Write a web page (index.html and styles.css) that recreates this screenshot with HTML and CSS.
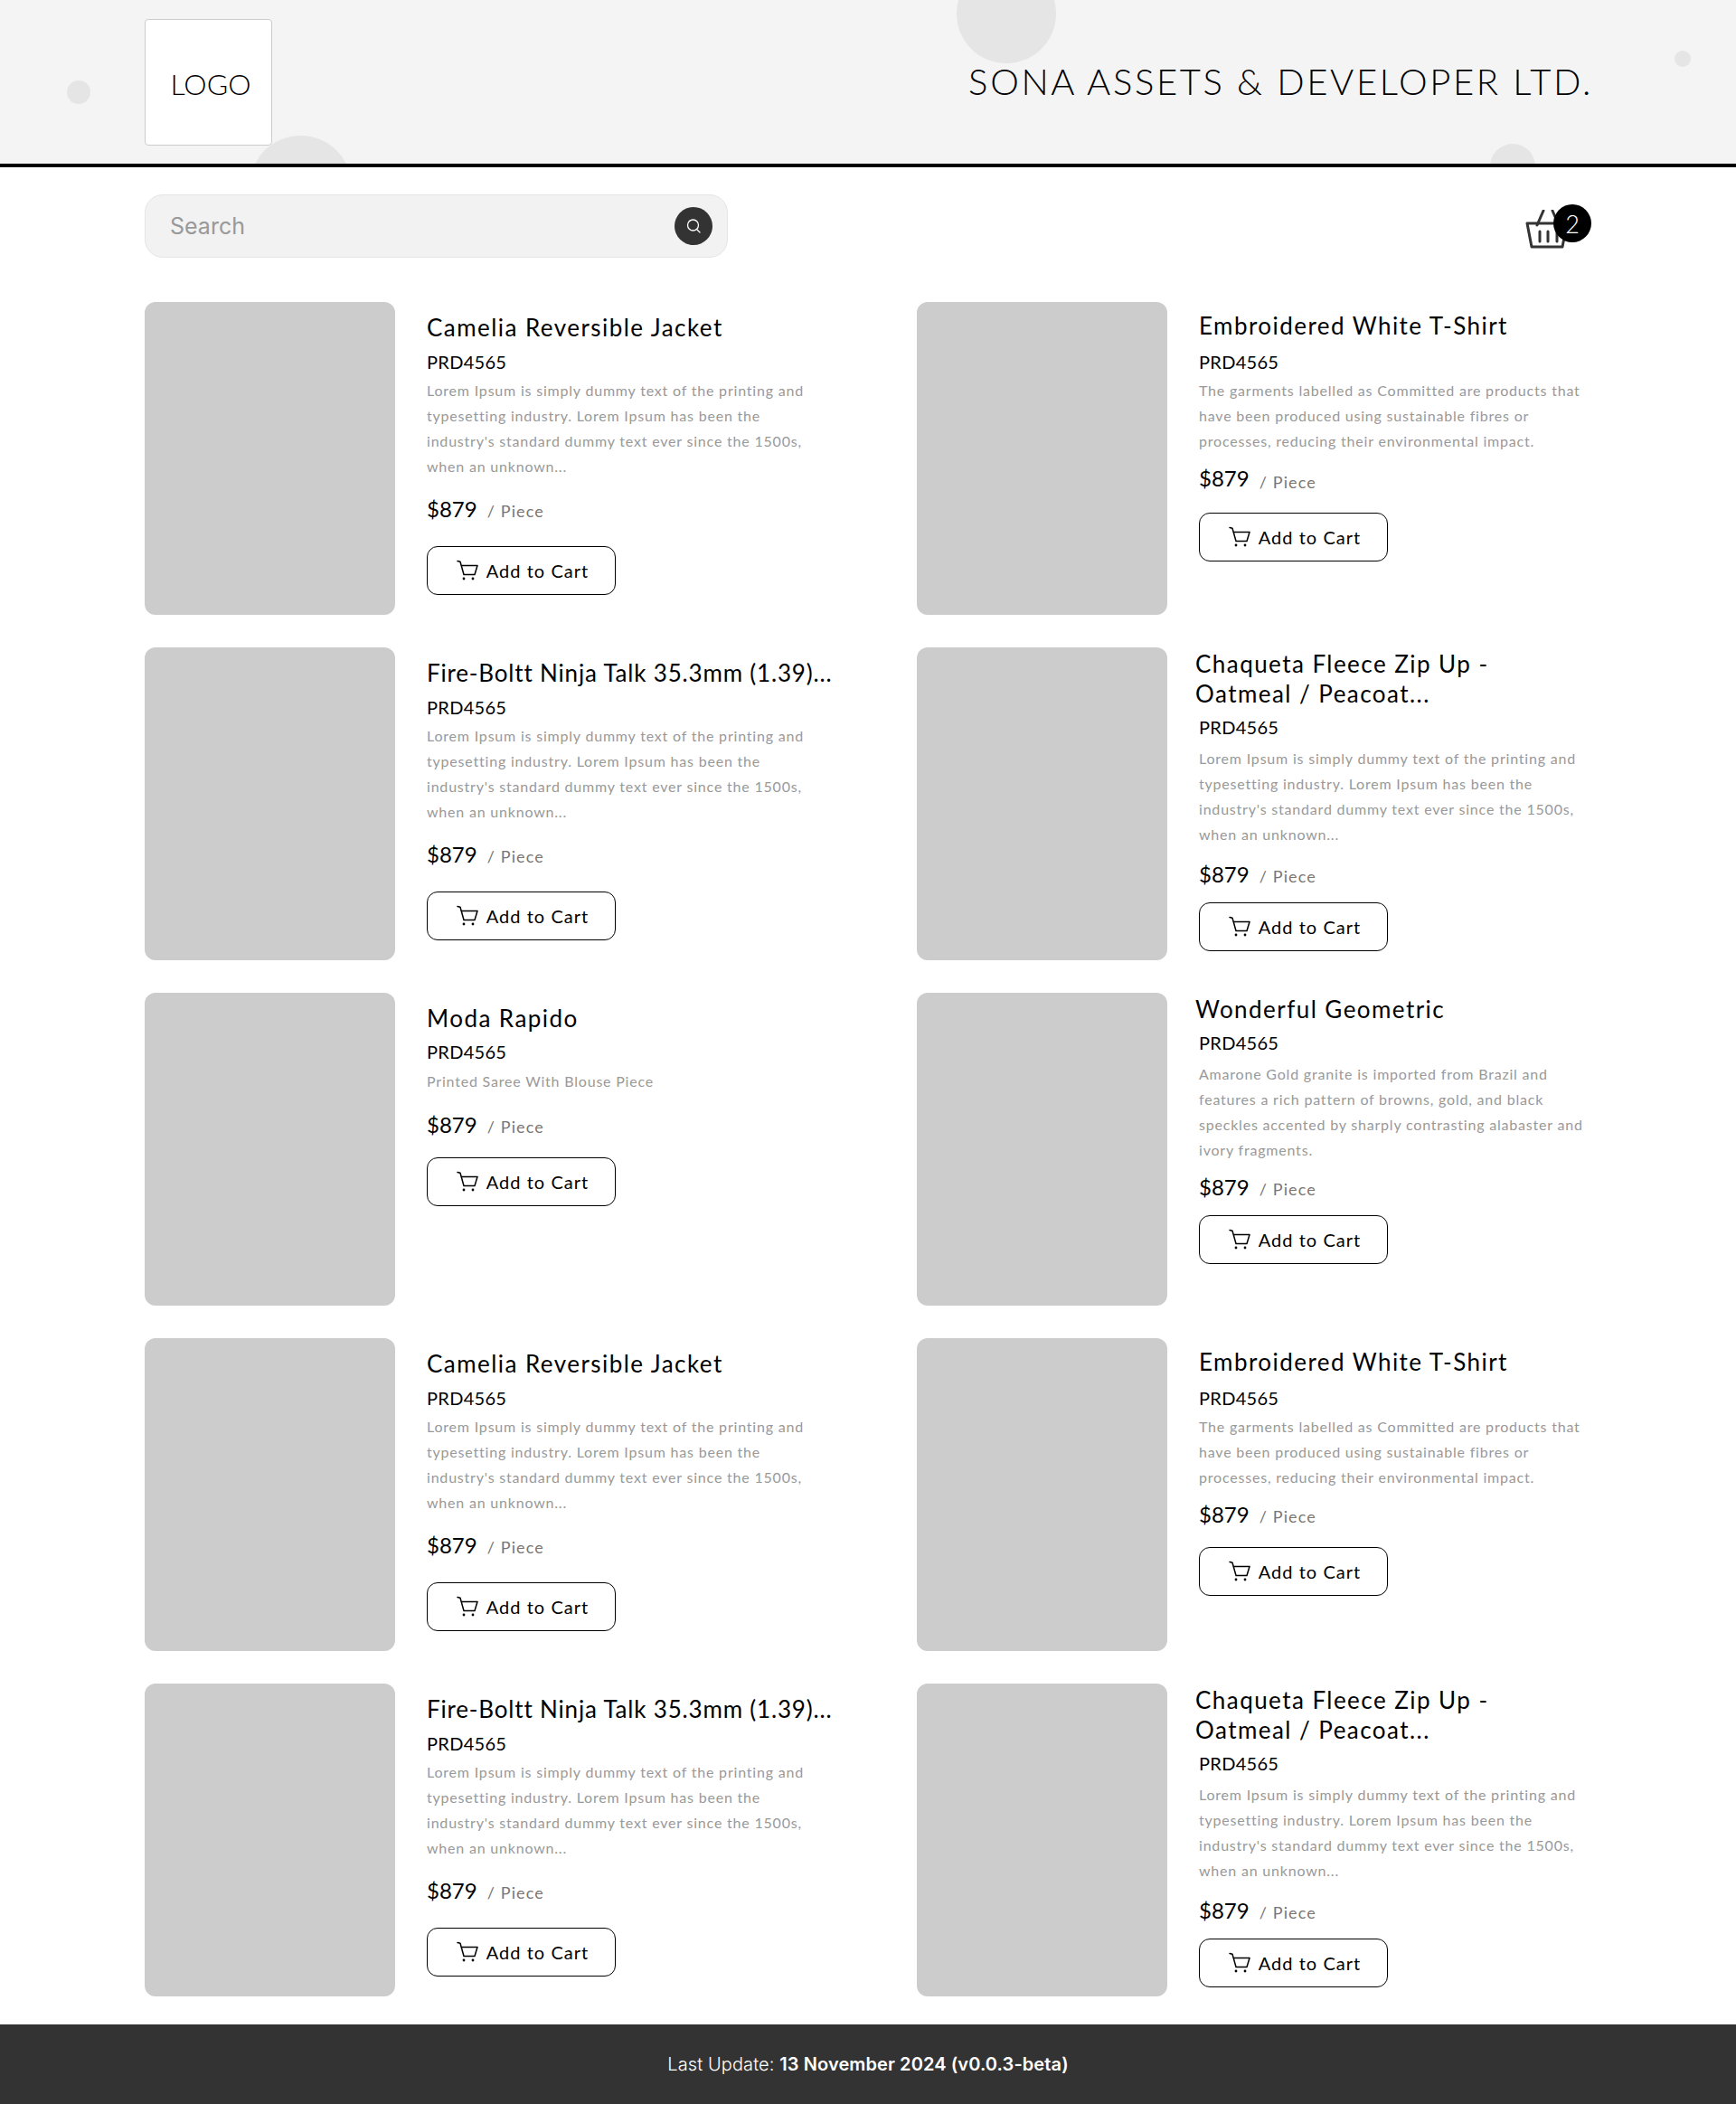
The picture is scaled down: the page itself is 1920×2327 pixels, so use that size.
FILE: index.html
```html
<!DOCTYPE html>
<html lang="en">
<head>
  <meta charset="UTF-8">
  <title>Sona Assets &amp; Developer Ltd.</title>
  <link rel="stylesheet" href="styles.css">
</head>
<body>

<!-- header -->
<div class="header">
  <span class="dot dot-1"></span>
  <span class="dot dot-2"></span>
  <span class="dot dot-3"></span>
  <span class="dot dot-4"></span>
  <span class="dot dot-5"></span>
  <div class="logo">LOGO</div>
  <div class="company">SONA ASSETS &amp; DEVELOPER LTD.</div>
</div>

<!-- search + basket -->
<div class="toolbar">
  <div class="search">
    <input type="text" placeholder="Search">
    <button class="search-btn" type="button">
      <svg viewBox="0 0 18 18" width="18" height="18" fill="none" stroke="#fff" stroke-width="1.3" stroke-linecap="round"><circle cx="8.5" cy="8" r="6"/><path d="M12.5 12.5l3.5 3.5"/></svg>
    </button>
  </div>
  <div class="basket">
    <svg viewBox="0 0 48 44" width="48" height="44" fill="none" stroke="#333" stroke-width="3" stroke-linecap="round" stroke-linejoin="round">
      <path d="M2 15H46L41 41H7Z"/>
      <path d="M13 17L20 1M30 1L37 17"/>
      <path d="M16 24V35M25 24V35M35 24V35"/>
    </svg>
    <span class="badge">2</span>
  </div>
</div>

<!-- products -->
<div class="products">

  <div class="card">
    <div class="thumb"></div>
    <div class="info">
      <div class="title">Camelia Reversible Jacket</div>
      <div class="code">PRD4565</div>
      <p class="desc">Lorem Ipsum is simply dummy text of the printing and typesetting industry. Lorem Ipsum has been the industry's standard dummy text ever since the 1500s, when an unknown...</p>
      <div class="price">$879 <span class="unit">/ Piece</span></div>
      <a href="#" class="add-btn"><svg class="cart-icon" viewBox="0 0 24 24"><path d="M1 1.5L4 2.2L8 16.5H20L23 6.5H5"/><circle cx="8" cy="21" r="1.4"/><circle cx="18" cy="21" r="1.4"/></svg>Add to Cart</a>
    </div>
  </div>

  <div class="card short">
    <div class="thumb"></div>
    <div class="info">
      <div class="title">Embroidered White T-Shirt</div>
      <div class="code">PRD4565</div>
      <p class="desc">The garments labelled as Committed are products that have been produced using sustainable fibres or processes, reducing their environmental impact.</p>
      <div class="price">$879 <span class="unit low">/ Piece</span></div>
      <a href="#" class="add-btn"><svg class="cart-icon" viewBox="0 0 24 24"><path d="M1 1.5L4 2.2L8 16.5H20L23 6.5H5"/><circle cx="8" cy="21" r="1.4"/><circle cx="18" cy="21" r="1.4"/></svg>Add to Cart</a>
    </div>
  </div>

  <div class="card">
    <div class="thumb"></div>
    <div class="info">
      <div class="title dense">Fire-Boltt Ninja Talk 35.3mm (1.39)...</div>
      <div class="code">PRD4565</div>
      <p class="desc">Lorem Ipsum is simply dummy text of the printing and typesetting industry. Lorem Ipsum has been the industry's standard dummy text ever since the 1500s, when an unknown...</p>
      <div class="price">$879 <span class="unit">/ Piece</span></div>
      <a href="#" class="add-btn"><svg class="cart-icon" viewBox="0 0 24 24"><path d="M1 1.5L4 2.2L8 16.5H20L23 6.5H5"/><circle cx="8" cy="21" r="1.4"/><circle cx="18" cy="21" r="1.4"/></svg>Add to Cart</a>
    </div>
  </div>

  <div class="card two-line">
    <div class="thumb"></div>
    <div class="info">
      <div class="title">Chaqueta Fleece Zip Up -<br>Oatmeal / Peacoat...</div>
      <div class="code">PRD4565</div>
      <p class="desc">Lorem Ipsum is simply dummy text of the printing and typesetting industry. Lorem Ipsum has been the industry's standard dummy text ever since the 1500s, when an unknown...</p>
      <div class="price">$879 <span class="unit">/ Piece</span></div>
      <a href="#" class="add-btn"><svg class="cart-icon" viewBox="0 0 24 24"><path d="M1 1.5L4 2.2L8 16.5H20L23 6.5H5"/><circle cx="8" cy="21" r="1.4"/><circle cx="18" cy="21" r="1.4"/></svg>Add to Cart</a>
    </div>
  </div>

  <div class="card one-line">
    <div class="thumb"></div>
    <div class="info">
      <div class="title">Moda Rapido</div>
      <div class="code">PRD4565</div>
      <p class="desc">Printed Saree With Blouse Piece</p>
      <div class="price">$879 <span class="unit">/ Piece</span></div>
      <a href="#" class="add-btn"><svg class="cart-icon" viewBox="0 0 24 24"><path d="M1 1.5L4 2.2L8 16.5H20L23 6.5H5"/><circle cx="8" cy="21" r="1.4"/><circle cx="18" cy="21" r="1.4"/></svg>Add to Cart</a>
    </div>
  </div>

  <div class="card tight">
    <div class="thumb"></div>
    <div class="info">
      <div class="title">Wonderful Geometric</div>
      <div class="code">PRD4565</div>
      <p class="desc">Amarone Gold granite is imported from Brazil and features a rich pattern of browns, gold, and black speckles accented by sharply contrasting alabaster and ivory fragments.</p>
      <div class="price">$879 <span class="unit">/ Piece</span></div>
      <a href="#" class="add-btn"><svg class="cart-icon" viewBox="0 0 24 24"><path d="M1 1.5L4 2.2L8 16.5H20L23 6.5H5"/><circle cx="8" cy="21" r="1.4"/><circle cx="18" cy="21" r="1.4"/></svg>Add to Cart</a>
    </div>
  </div>

  <div class="card">
    <div class="thumb"></div>
    <div class="info">
      <div class="title">Camelia Reversible Jacket</div>
      <div class="code">PRD4565</div>
      <p class="desc">Lorem Ipsum is simply dummy text of the printing and typesetting industry. Lorem Ipsum has been the industry's standard dummy text ever since the 1500s, when an unknown...</p>
      <div class="price">$879 <span class="unit">/ Piece</span></div>
      <a href="#" class="add-btn"><svg class="cart-icon" viewBox="0 0 24 24"><path d="M1 1.5L4 2.2L8 16.5H20L23 6.5H5"/><circle cx="8" cy="21" r="1.4"/><circle cx="18" cy="21" r="1.4"/></svg>Add to Cart</a>
    </div>
  </div>

  <div class="card short">
    <div class="thumb"></div>
    <div class="info">
      <div class="title">Embroidered White T-Shirt</div>
      <div class="code">PRD4565</div>
      <p class="desc">The garments labelled as Committed are products that have been produced using sustainable fibres or processes, reducing their environmental impact.</p>
      <div class="price">$879 <span class="unit">/ Piece</span></div>
      <a href="#" class="add-btn"><svg class="cart-icon" viewBox="0 0 24 24"><path d="M1 1.5L4 2.2L8 16.5H20L23 6.5H5"/><circle cx="8" cy="21" r="1.4"/><circle cx="18" cy="21" r="1.4"/></svg>Add to Cart</a>
    </div>
  </div>

  <div class="card">
    <div class="thumb"></div>
    <div class="info">
      <div class="title dense">Fire-Boltt Ninja Talk 35.3mm (1.39)...</div>
      <div class="code">PRD4565</div>
      <p class="desc">Lorem Ipsum is simply dummy text of the printing and typesetting industry. Lorem Ipsum has been the industry's standard dummy text ever since the 1500s, when an unknown...</p>
      <div class="price">$879 <span class="unit">/ Piece</span></div>
      <a href="#" class="add-btn"><svg class="cart-icon" viewBox="0 0 24 24"><path d="M1 1.5L4 2.2L8 16.5H20L23 6.5H5"/><circle cx="8" cy="21" r="1.4"/><circle cx="18" cy="21" r="1.4"/></svg>Add to Cart</a>
    </div>
  </div>

  <div class="card two-line">
    <div class="thumb"></div>
    <div class="info">
      <div class="title">Chaqueta Fleece Zip Up -<br>Oatmeal / Peacoat...</div>
      <div class="code">PRD4565</div>
      <p class="desc">Lorem Ipsum is simply dummy text of the printing and typesetting industry. Lorem Ipsum has been the industry's standard dummy text ever since the 1500s, when an unknown...</p>
      <div class="price">$879 <span class="unit">/ Piece</span></div>
      <a href="#" class="add-btn"><svg class="cart-icon" viewBox="0 0 24 24"><path d="M1 1.5L4 2.2L8 16.5H20L23 6.5H5"/><circle cx="8" cy="21" r="1.4"/><circle cx="18" cy="21" r="1.4"/></svg>Add to Cart</a>
    </div>
  </div>

</div>

<!-- footer -->
<div class="footer">
  <span>Last Update: <strong>13 November 2024 (v0.0.3-beta)</strong></span>
</div>

</body>
</html>
```

FILE: styles.css
```css
/* base */
body {
  margin: 0;
  font-family: "Lato", sans-serif;
  color: #000;
  background: #fff;
}

/* header */
.header {
  position: relative;
  height: 181px;
  padding: 0 160px;
  background: #f4f4f4;
  border-bottom: 4px solid #000;
  display: flex;
  align-items: center;
  justify-content: space-between;
  overflow: hidden;
}
.dot {
  position: absolute;
  border-radius: 50%;
  background: #e5e5e5;
}
.dot-1 { left: 74px; top: 89px; width: 26px; height: 26px; }
.dot-2 { left: 276px; top: 150px; width: 113px; height: 113px; }
.dot-3 { left: 1058px; top: -40px; width: 110px; height: 110px; }
.dot-4 { left: 1852px; top: 56px; width: 18px; height: 18px; }
.dot-5 { left: 1648px; top: 159px; width: 50px; height: 50px; }

.logo {
  position: relative;
  width: 141px;
  height: 140px;
  padding: 5px 0 0 5px;
  box-sizing: border-box;
  background: #fff;
  border: 1px solid #ccc;
  border-radius: 4px;
  display: flex;
  align-items: center;
  justify-content: center;
  font-size: 32px;
  font-weight: 300;
  line-height: 1;
}
.company {
  position: relative;
  font-size: 40px;
  font-weight: 300;
  line-height: 48px;
  letter-spacing: 2.65px;
  margin: 0 -2px 1px 0;
}

/* search + basket */
.toolbar {
  padding: 30px 160px 49px;
  display: flex;
  justify-content: space-between;
  align-items: flex-start;
}
.search {
  width: 645px;
  height: 70px;
  box-sizing: border-box;
  padding: 0 16px 0 27px;
  background: #f2f2f2;
  border: 1px solid #e5e5e5;
  border-radius: 20px;
  display: flex;
  align-items: center;
}
.search input {
  flex: 1;
  border: 0;
  outline: 0;
  background: none;
  padding: 0;
  font-family: "Inter", sans-serif;
  font-size: 25px;
}
.search input::placeholder {
  color: #999;
}
.search-btn {
  width: 42px;
  height: 42px;
  padding: 0;
  border: 0;
  border-radius: 50%;
  background: #333;
  display: flex;
  align-items: center;
  justify-content: center;
}
.basket {
  position: relative;
  width: 73px;
  height: 44px;
  margin-top: 17px;
}
.basket svg {
  display: block;
}
.badge {
  position: absolute;
  right: 0;
  top: -6px;
  width: 42px;
  height: 42px;
  border-radius: 50%;
  background: #000;
  color: #fff;
  font-size: 27px;
  font-weight: 300;
  display: flex;
  align-items: center;
  justify-content: center;
}

/* product grid */
.products {
  padding: 0 160px;
  display: grid;
  grid-template-columns: 746px 746px;
  gap: 36px 108px;
}
.card {
  display: flex;
  height: 346px;
}
.thumb {
  width: 277px;
  height: 346px;
  flex: none;
  background: #ccc;
  border-radius: 12px;
}
.info {
  margin-left: 35px;
  padding-top: 12px;
}
.title {
  font-size: 26px;
  line-height: 32px;
  letter-spacing: 1.45px;
  white-space: nowrap;
}
.title.dense {
  letter-spacing: .82px;
}
.code {
  margin-top: 10px;
  font-size: 20px;
  line-height: 24px;
  letter-spacing: .3px;
}
.desc {
  margin: 6px 0 0;
  width: 434px;
  font-size: 16px;
  line-height: 28px;
  letter-spacing: .8px;
  color: #999;
}
.price {
  margin-top: 18px;
  font-size: 24px;
  line-height: 30px;
}
.unit {
  margin-left: 5px;
  font-size: 18px;
  letter-spacing: 1.1px;
  color: #777;
}
.unit.low {
  vertical-align: -2px;
}
.add-btn {
  margin-top: 24px;
  width: 209px;
  height: 54px;
  box-sizing: border-box;
  padding-left: 3px;
  border: 1.5px solid #000;
  border-radius: 12px;
  color: #000;
  text-decoration: none;
  font-size: 20px;
  letter-spacing: 1.05px;
  display: flex;
  align-items: center;
  justify-content: center;
  gap: 9px;
}
.cart-icon {
  width: 24px;
  height: 24px;
  flex: none;
  fill: none;
  stroke: #000;
  stroke-width: 1.5;
  stroke-linecap: round;
  stroke-linejoin: round;
}
.cart-icon circle {
  fill: #000;
  stroke: none;
}

/* cards whose text sits differently */
.short .info { padding-top: 10px; }
.short .code { margin-top: 12px; }
.short .price { margin-top: 12px; }
.short .add-btn { margin-top: 19px; }

.two-line .info { padding-top: 2px; }
.two-line .title { margin-left: -4px; line-height: 33px; }
.two-line .code { margin-top: 8px; }
.two-line .desc { margin-top: 9px; }
.two-line .price { margin-top: 15px; }
.two-line .add-btn { margin-top: 14px; }

.one-line .info { padding-top: 12px; }
.one-line .code { margin-top: 9px; }
.one-line .desc { margin-top: 7px; }
.one-line .price { margin-top: 19px; }
.one-line .add-btn { margin-top: 19px; }

.tight .info { padding-top: 2px; }
.tight .title { margin-left: -4px; }
.tight .code { margin-top: 9px; }
.tight .desc { margin-top: 9px; }
.tight .price { margin-top: 12px; }
.tight .add-btn { margin-top: 14px; }

/* footer */
.footer {
  margin-top: 31px;
  height: 88px;
  background: #333;
  color: #fff;
  font-family: "Inter", sans-serif;
  font-size: 20px;
  font-weight: 300;
  letter-spacing: .1px;
  display: flex;
  align-items: center;
  justify-content: center;
}
.footer strong {
  font-weight: 600;
}
```
